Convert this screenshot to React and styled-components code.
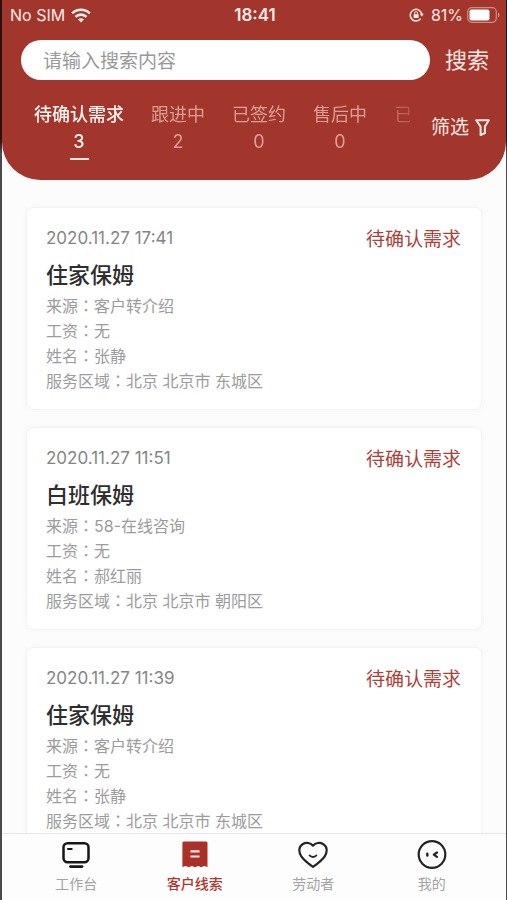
import React, { useState } from 'react';
import styled, { createGlobalStyle } from 'styled-components';

const GlobalStyle = createGlobalStyle`
  * {
    box-sizing: border-box;
  }
  body {
    margin: 0;
    background-color: #fcfcfc;
    font-family: Inter, "Noto Sans CJK SC", sans-serif;
  }
  button, input {
    font-family: inherit;
    border: 0;
    padding: 0;
    margin: 0;
    background: none;
  }
  button {
    cursor: pointer;
  }
`

const Page = styled.div`
  display: flex;
  flex-direction: column;
  height: 100vh;
  overflow: hidden;
  border: 0 solid #4a4a4c;
  border-width: 0 1px 0 2px;
  border-image: linear-gradient(#2c0f10 140px, #4a4a4c 154px) 1;
`

const Header = styled.header`
  flex: none;
  background-color: #a3362c;
  border-radius: 0 0 38px 38px;
  color: #fbeae6;
  padding-bottom: 20px;
`

const StatusBar = styled.div`
  display: grid;
  grid-template-columns: 1fr auto 1fr;
  align-items: center;
  height: 30px;
  padding: 0 6px 0 8px;
  font-size: 16px;
  line-height: 20px;
`

const StatusSide = styled.div`
  display: flex;
  align-items: center;
  justify-content: ${props => props.$end ? 'flex-end' : 'flex-start'};
  gap: ${props => props.$end ? '4px' : '6px'};
`

const Clock = styled.div`
  font-size: 17px;
  font-weight: 600;
`

const SearchForm = styled.form`
  display: flex;
  align-items: center;
  gap: 15px;
  padding: 10px 17px 0 19px;
`

const SearchInput = styled.input`
  flex: 1;
  min-width: 0;
  height: 40px;
  padding: 2px 22px 0;
  border-radius: 20px;
  background-color: #fff;
  color: #333;
  font-size: 19px;
  outline: none;
  &::placeholder {
    color: #999;
    opacity: 1;
  }
`

const SearchButton = styled.button`
  color: #fbeae6;
  font-size: 22px;
  line-height: 32px;
`

const TabRow = styled.div`
  display: flex;
  align-items: center;
  padding: 21px 16px 0 32px;
`

const TabList = styled.div`
  display: flex;
  flex: 1;
  min-width: 0;
  gap: 27px;
  overflow: hidden;
  mask-image: linear-gradient(to right, #000 90%, rgba(0, 0, 0, 0.3) 100%);
`

const Tab = styled.button`
  flex: none;
  display: flex;
  flex-direction: column;
  align-items: center;
  color: ${props => props.$active ? '#fff4f0' : '#dd9f94'};
  font-size: 18px;
  font-weight: ${props => props.$active ? 500 : 400};
  line-height: 27px;
  &::after {
    content: "";
    width: 19px;
    height: 2px;
    margin-top: 3px;
    background-color: ${props => props.$active ? '#fbeae6' : 'transparent'};
  }
`

const FilterButton = styled.button`
  flex: none;
  display: flex;
  align-items: center;
  gap: 6px;
  margin-left: 21px;
  padding-bottom: 6px;
  color: #fbeae6;
  font-size: 19px;
  line-height: 28px;
`

const ClueList = styled.main`
  flex: 1;
  min-height: 0;
  display: flex;
  flex-direction: column;
  gap: 17px;
  overflow: hidden;
  padding: 27px 24px 0;
`

const Card = styled.article`
  flex: none;
  padding: 16px 20px 15px 19px;
  background-color: #fff;
  border: 1px solid #f3f3f3;
  border-radius: 7px;
  box-shadow: 0 0 6px rgba(0, 0, 0, 0.03);
`

const CardTop = styled.div`
  display: flex;
  justify-content: space-between;
  align-items: center;
  height: 28px;
  line-height: 28px;
`

const CardDate = styled.time`
  color: #858585;
  font-size: 17px;
`

const CardStatus = styled.span`
  padding-top: 4px;
  color: #ad4138;
  font-size: 19px;
`

const CardTitle = styled.h2`
  margin: 7px 0 3px;
  color: #2e2e2e;
  font-size: 22px;
  font-weight: 500;
  line-height: 32px;
`

const CardLine = styled.p`
  margin: 0;
  color: #9c9c9c;
  font-size: 16px;
  line-height: 25px;
`

// the traditional face centres the full-width colon in its square
const Colon = styled.span`
  font-family: "Noto Sans CJK TC", sans-serif;
  line-height: 0;
`

const NavBar = styled.nav`
  flex: none;
  display: grid;
  grid-template-columns: repeat(4, 1fr);
  height: 67px;
  padding: 0 15px;
  background-color: #fdfdfd;
  border-top: 1px solid #e6e6e6;
`

const NavLink = styled.a`
  display: flex;
  flex-direction: column;
  align-items: center;
  gap: 4px;
  padding-top: 6px;
  color: ${props => props.$active ? '#b0362c' : '#a3a3a3'};
  font-size: 14px;
  font-weight: ${props => props.$active ? 500 : 400};
  line-height: 20px;
  text-decoration: none;
`

const WifiIcon = () => (
  <svg width="20" height="15" viewBox="0 0 20 15" fill="none" stroke="currentColor" strokeWidth="2.6">
    <path d="M1.2 5.4C6 .6 14 .6 18.8 5.4" />
    <path d="M4.5 8.9c3-3 8-3 11 0" />
    <path d="M10 14.6l-3-3.2c1.7-1.5 4.3-1.5 6 0z" fill="currentColor" stroke="none" />
  </svg>
)

const LockIcon = () => (
  <svg width="18" height="14" viewBox="0 0 18 14" fill="none" stroke="currentColor">
    <path d="M12.8 6.2A5.8 5.8 0 1 0 11.6 10.8" strokeWidth="1.5" />
    <path d="M10.8 5.8h4l-2 2.800z" fill="currentColor" stroke="none" />
    <rect x="4.6" y="6.2" width="5" height="3.8" rx=".5" fill="currentColor" stroke="none" />
    <path d="M5.6 6.5V5.2a1.5 1.5 0 0 1 3 0v1.300" />
  </svg>
)

const BatteryIcon = () => (
  <svg width="33" height="16" viewBox="0 0 33 16">
    <rect x=".7" y=".7" width="28.6" height="14.6" rx="4" fill="none" stroke="#d08d83" strokeWidth="1.2" />
    <rect x="2.5" y="2.5" width="20" height="11" rx="2" fill="#fff" />
    <path d="M31 5.5c2 .8 2 4.2 0 5z" fill="#d08d83" />
  </svg>
)

const FilterIcon = () => (
  <svg width="15" height="17" viewBox="0 0 15 17" fill="none" stroke="currentColor" strokeWidth="2" strokeLinejoin="round">
    <path d="M1.2 1.2h12.6L9.9 7.600v6.600L5.600 16V7.600z" />
  </svg>
)

const DeskIcon = () => (
  <svg width="30" height="30" viewBox="0 0 30 30" fill="none" stroke="#161616" strokeWidth="2.5" strokeLinecap="round">
    <rect x="2.5" y="3.3" width="25" height="19" rx="4" />
    <path d="M7 9h3.600" strokeWidth="2.2" />
    <path d="M9.5 26.600h11.500" strokeWidth="2.800" />
  </svg>
)

const ClueIcon = () => (
  <svg width="30" height="30" viewBox="0 0 30 30">
    <path d="M4 1.500h22a1.500 1.500 0 0 1 1.500 1.500v24c-1.200 0-2-.9-3.100-.9s-2 1.100-3.100 1.100-2-1.100-3.100-1.100-2 1.100-3.200 1.100-2-1.100-3.100-1.100-2 1.100-3.100 1.100-2-1.100-3.100-1.100-2 .9-3.300.9V3A1.500 1.500 0 0 1 4 1.500z" fill="#ab3027" />
    <path d="M10.500 11.300h9M10.500 16.500h9" stroke="#fbe9e5" strokeWidth="2.200" />
  </svg>
)

const HeartIcon = () => (
  <svg width="30" height="30" viewBox="0 0 30 30" fill="none" stroke="#242424" strokeWidth="2.2" strokeLinecap="round" strokeLinejoin="round">
    <path d="M15 26.800C11 24 6 20.300 3.300 16.300.2 11.500.8 6.500 4.600 4.200 8.200 2 12.600 2.800 15 5.700c2.400-2.900 6.800-3.700 10.400-1.500 3.800 2.300 4.400 7.300 1.300 12.100C24 20.300 19 24 15 26.800z" />
    <path d="M11.700 15.500c1.500 1.900 5.100 1.900 6.600 0" strokeWidth="2" />
  </svg>
)

const FaceIcon = () => (
  <svg width="30" height="30" viewBox="0 0 30 30" fill="none" stroke="#242424" strokeLinecap="round" strokeLinejoin="round">
    <circle cx="15" cy="14.500" r="13.300" strokeWidth="2.200" />
    <path d="M10.300 13.800v1.800" strokeWidth="2.400" />
    <path d="M20 12.500l-3.200 2.200 3.200 2.200" strokeWidth="2.200" />
  </svg>
)

const tabs = [
  { name: '待确认需求', count: 3 },
  { name: '跟进中', count: 2 },
  { name: '已签约', count: 0 },
  { name: '售后中', count: 0 },
  { name: '已', count: '' },
];

const clues = [
  { id: 1, date: '2020.11.27 17:41', status: '待确认需求', title: '住家保姆', source: '客户转介绍', salary: '无', name: '张静', area: '北京 北京市 东城区' },
  { id: 2, date: '2020.11.27 11:51', status: '待确认需求', title: '白班保姆', source: '58-在线咨询', salary: '无', name: '郝红丽', area: '北京 北京市 朝阳区' },
  { id: 3, date: '2020.11.27 11:39', status: '待确认需求', title: '住家保姆', source: '客户转介绍', salary: '无', name: '张静', area: '北京 北京市 东城区' },
];

const navItems = [
  { name: '工作台', icon: <DeskIcon /> },
  { name: '客户线索', icon: <ClueIcon /> },
  { name: '劳动者', icon: <HeartIcon /> },
  { name: '我的', icon: <FaceIcon /> },
];

function Field({ label, value }) {
  return <CardLine>{label}<Colon>：</Colon>{value}</CardLine>
}

function App() {
  const [activeTab, setActiveTab] = useState(0);
  const [keyword, setKeyword] = useState('');

  return (
    <>
      <GlobalStyle />
      <Page>
        <Header>
          <StatusBar>
            <StatusSide>No SIM <WifiIcon /></StatusSide>
            <Clock>18:41</Clock>
            <StatusSide $end><LockIcon />81%<BatteryIcon /></StatusSide>
          </StatusBar>
          <SearchForm onSubmit={e => e.preventDefault()}>
            <SearchInput
              type="text"
              aria-label="搜索"
              placeholder="请输入搜索内容"
              value={keyword}
              onChange={e => setKeyword(e.target.value)}
            />
            <SearchButton type="submit">搜索</SearchButton>
          </SearchForm>
          <TabRow>
            <TabList>
              {tabs.map((tab, index) => (
                <Tab key={index} $active={index === activeTab} onClick={() => setActiveTab(index)}>
                  <span>{tab.name}</span>
                  <span>{tab.count}</span>
                </Tab>
              ))}
            </TabList>
            <FilterButton>筛选<FilterIcon /></FilterButton>
          </TabRow>
        </Header>
        <ClueList>
          {clues.map(clue => (
            <Card key={clue.id}>
              <CardTop>
                <CardDate>{clue.date}</CardDate>
                <CardStatus>{clue.status}</CardStatus>
              </CardTop>
              <CardTitle>{clue.title}</CardTitle>
              <Field label="来源" value={clue.source} />
              <Field label="工资" value={clue.salary} />
              <Field label="姓名" value={clue.name} />
              <Field label="服务区域" value={clue.area} />
            </Card>
          ))}
        </ClueList>
        <NavBar>
          {navItems.map((item, index) => (
            <NavLink key={item.name} href="#" $active={index === 1}>
              {item.icon}
              {item.name}
            </NavLink>
          ))}
        </NavBar>
      </Page>
    </>
  )
}

export default App;
